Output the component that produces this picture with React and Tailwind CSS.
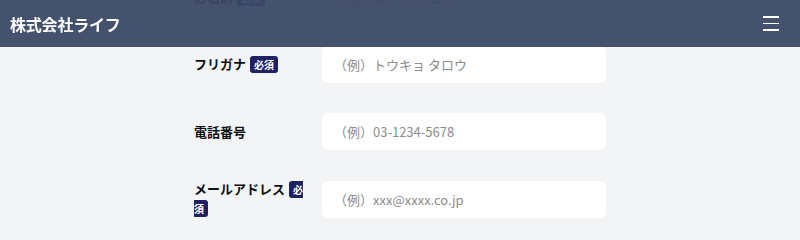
import { useState } from "react";

const FIELDS = [
  { key: "name", label: "お名前", required: true, placeholder: "（例）タナカ タロウ" },
  { key: "kana", label: "フリガナ", required: true, placeholder: "（例）トウキョ タロウ" },
  { key: "tel", label: "電話番号", required: false, placeholder: "（例）03-1234-5678" },
  { key: "email", label: "メールアドレス", required: true, placeholder: "（例）xxx@xxxx.co.jp" },
];

export default function App() {
  const [values, setValues] = useState({});

  return (
    <div
      className="relative min-h-screen bg-[#f3f4f6] overflow-hidden"
      style={{ fontFamily: '"Noto Sans CJK JP", "Noto Sans", sans-serif' }}
    >
      {/* Header */}
      <header className="fixed top-0 left-0 right-0 z-10 h-[47px] flex items-center justify-between pl-[10px] pr-[21px] bg-[#3b4966]/95">
        <h1 className="text-white font-bold text-[16px] leading-none tracking-[-0.2px]">株式会社ライフ</h1>
        <button className="flex flex-col gap-[5px] w-[16px]">
          <span className="block h-[1.5px] w-full bg-white" />
          <span className="block h-[1.5px] w-full bg-white" />
          <span className="block h-[1.5px] w-full bg-white" />
        </button>
      </header>

      {/* Form */}
      <form className="w-[412px] mx-auto -mt-[21px] flex flex-col gap-[30px]">
        {FIELDS.map((f) => (
          <div key={f.key} className="flex items-center">
            <label className="w-[128px] pr-[14px] text-[13px] font-bold text-[#111] leading-[18px]">
              {f.label}
              {f.required && (
                <span className="ml-[4px] rounded-[3px] bg-[#1f2262] px-[4px] py-[1px] text-[10px] text-white font-bold">
                  必須
                </span>
              )}
            </label>
            <input
              type="text"
              value={values[f.key] || ""}
              onChange={(e) => setValues({ ...values, [f.key]: e.target.value })}
              placeholder={f.placeholder}
              className="w-[284px] h-[37px] rounded-[6px] bg-white pl-[12px] text-[13px] text-[#333] placeholder:text-[#8c8c8c] outline-none"
            />
          </div>
        ))}
      </form>
    </div>
  );
}
